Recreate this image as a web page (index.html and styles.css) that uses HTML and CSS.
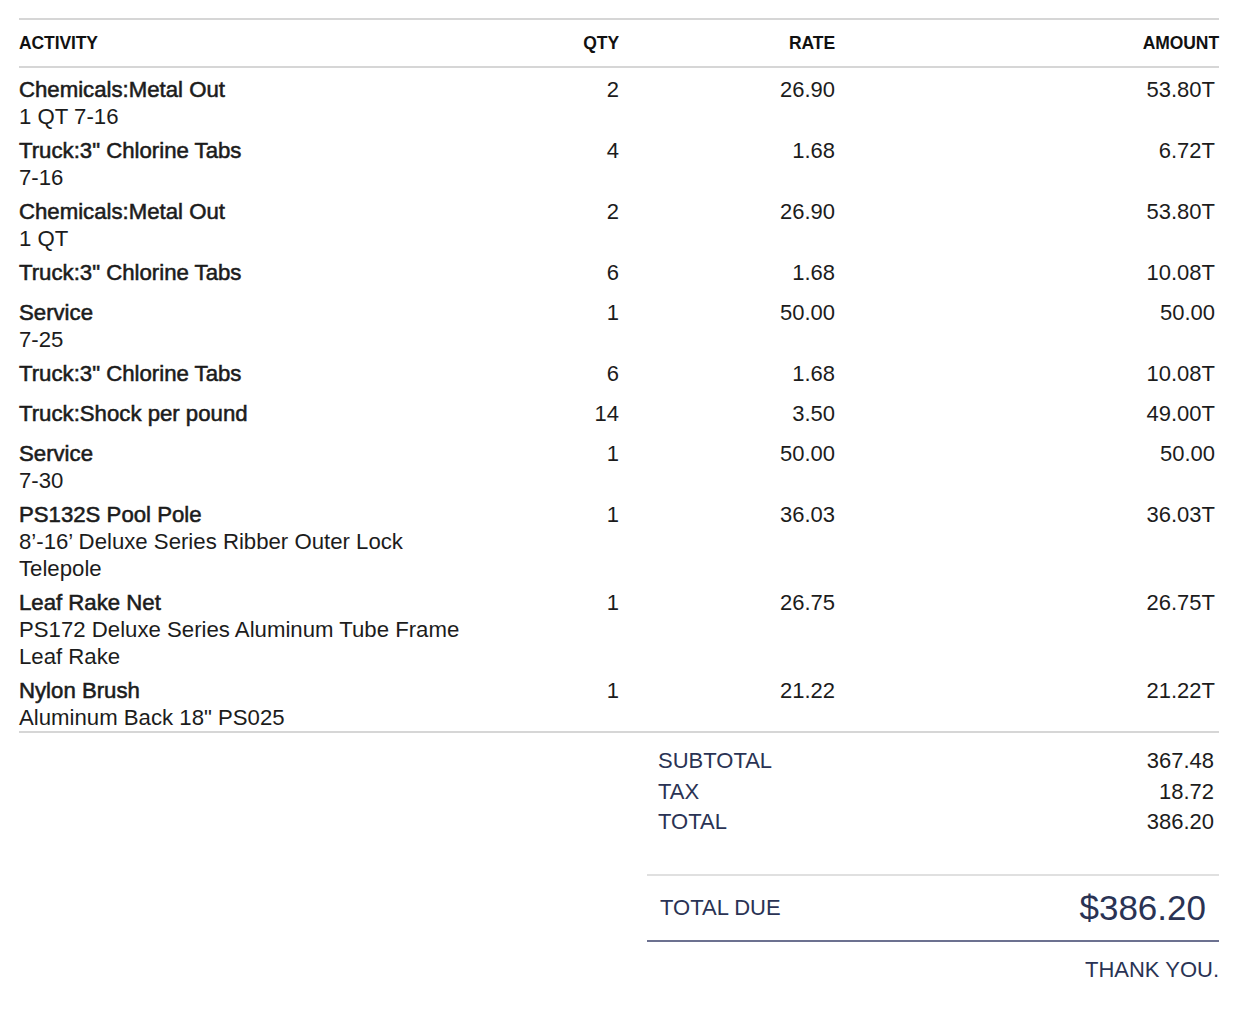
FILE: index.html
```html
<!DOCTYPE html>
<html>
<head>
<meta charset="utf-8">
<link rel="stylesheet" href="styles.css">
</head>
<body>
<div class="invoice">
  <div class="row head">
    <div class="c-act">ACTIVITY</div>
    <div class="c-num">QTY</div>
    <div class="c-num">RATE</div>
    <div class="c-num">AMOUNT</div>
  </div>
  <div class="items">
    <div class="row item">
      <div class="c-act"><div class="name">Chemicals:Metal Out</div><div class="desc">1 QT 7-16</div></div>
      <div class="c-num v">2</div><div class="c-num v">26.90</div><div class="c-num v amt">53.80T</div>
    </div>
    <div class="row item">
      <div class="c-act"><div class="name">Truck:3" Chlorine Tabs</div><div class="desc">7-16</div></div>
      <div class="c-num v">4</div><div class="c-num v">1.68</div><div class="c-num v amt">6.72T</div>
    </div>
    <div class="row item">
      <div class="c-act"><div class="name">Chemicals:Metal Out</div><div class="desc">1 QT</div></div>
      <div class="c-num v">2</div><div class="c-num v">26.90</div><div class="c-num v amt">53.80T</div>
    </div>
    <div class="row item">
      <div class="c-act"><div class="name">Truck:3" Chlorine Tabs</div></div>
      <div class="c-num v">6</div><div class="c-num v">1.68</div><div class="c-num v amt">10.08T</div>
    </div>
    <div class="row item">
      <div class="c-act"><div class="name">Service</div><div class="desc">7-25</div></div>
      <div class="c-num v">1</div><div class="c-num v">50.00</div><div class="c-num v amt">50.00</div>
    </div>
    <div class="row item">
      <div class="c-act"><div class="name">Truck:3" Chlorine Tabs</div></div>
      <div class="c-num v">6</div><div class="c-num v">1.68</div><div class="c-num v amt">10.08T</div>
    </div>
    <div class="row item">
      <div class="c-act"><div class="name">Truck:Shock per pound</div></div>
      <div class="c-num v">14</div><div class="c-num v">3.50</div><div class="c-num v amt">49.00T</div>
    </div>
    <div class="row item">
      <div class="c-act"><div class="name">Service</div><div class="desc">7-30</div></div>
      <div class="c-num v">1</div><div class="c-num v">50.00</div><div class="c-num v amt">50.00</div>
    </div>
    <div class="row item">
      <div class="c-act"><div class="name">PS132S Pool Pole</div><div class="desc">8’-16’ Deluxe Series Ribber Outer Lock<br>Telepole</div></div>
      <div class="c-num v">1</div><div class="c-num v">36.03</div><div class="c-num v amt">36.03T</div>
    </div>
    <div class="row item">
      <div class="c-act"><div class="name">Leaf Rake Net</div><div class="desc">PS172 Deluxe Series Aluminum Tube Frame<br>Leaf Rake</div></div>
      <div class="c-num v">1</div><div class="c-num v">26.75</div><div class="c-num v amt">26.75T</div>
    </div>
    <div class="row item">
      <div class="c-act"><div class="name">Nylon Brush</div><div class="desc">Aluminum Back 18" PS025</div></div>
      <div class="c-num v">1</div><div class="c-num v">21.22</div><div class="c-num v amt">21.22T</div>
    </div>
  </div>
  <div class="summary">
    <div class="totals">
      <div class="trow"><span class="label">SUBTOTAL</span><span class="val">367.48</span></div>
      <div class="trow"><span class="label">TAX</span><span class="val">18.72</span></div>
      <div class="trow"><span class="label">TOTAL</span><span class="val">386.20</span></div>
    </div>
    <div class="due">
      <span class="label">TOTAL DUE</span>
      <span class="due-amt">$386.20</span>
    </div>
    <div class="thanks">THANK YOU.</div>
  </div>
</div>
</body>
</html>
```
FILE: styles.css
```css
html, body {
  margin: 0;
  padding: 0;
  background: #fff;
}
body {
  font-family: "Liberation Sans", Arial, sans-serif;
  color: #1c1c1c;
}
.invoice {
  margin-left: 19px;
  width: 1200px;
  padding-top: 18px;
}
.row {
  display: grid;
  grid-template-columns: 500px 100px 216px 384px;
}
.head {
  border-top: 2px solid #d6d6d6;
  border-bottom: 2px solid #d6d6d6;
  height: 46px;
  align-items: center;
  font-weight: bold;
  font-size: 17.5px;
  letter-spacing: -0.1px;
  color: #111;
}
.c-num {
  text-align: right;
}
.items {
  padding-top: 1px;
  border-bottom: 2px solid #d6d6d6;
}
.item {
  padding-top: 7px;
  font-size: 22.2px;
  line-height: 27px;
}
.name {
  line-height: 27px;
  -webkit-text-stroke: 0.55px #1c1c1c;
}
.desc {
  line-height: 27px;
}
.v {
  line-height: 27px;
  padding-bottom: 6px;
  font-size: 22px;
}
.amt {
  padding-right: 4px;
}
.summary {
  margin-left: 628px;
  width: 572px;
}
.totals {
  padding: 13px 5px 0 11px;
}
.trow {
  display: flex;
  justify-content: space-between;
  font-size: 22px;
  line-height: 30.5px;
}
.label {
  color: #2a3354;
}
.val {
  color: #1c1c1c;
}
.due {
  margin-top: 36px;
  border-top: 2px solid #e0e0e0;
  border-bottom: 2px solid #6c7190;
  height: 64px;
  display: flex;
  justify-content: space-between;
  align-items: center;
  padding: 0 13px 0 13px;
  font-size: 22px;
}
.due-amt {
  font-size: 35px;
  color: #2a3354;
}
.thanks {
  text-align: right;
  margin-top: 15px;
  font-size: 22px;
  line-height: 26px;
  color: #2a3354;
}
```
